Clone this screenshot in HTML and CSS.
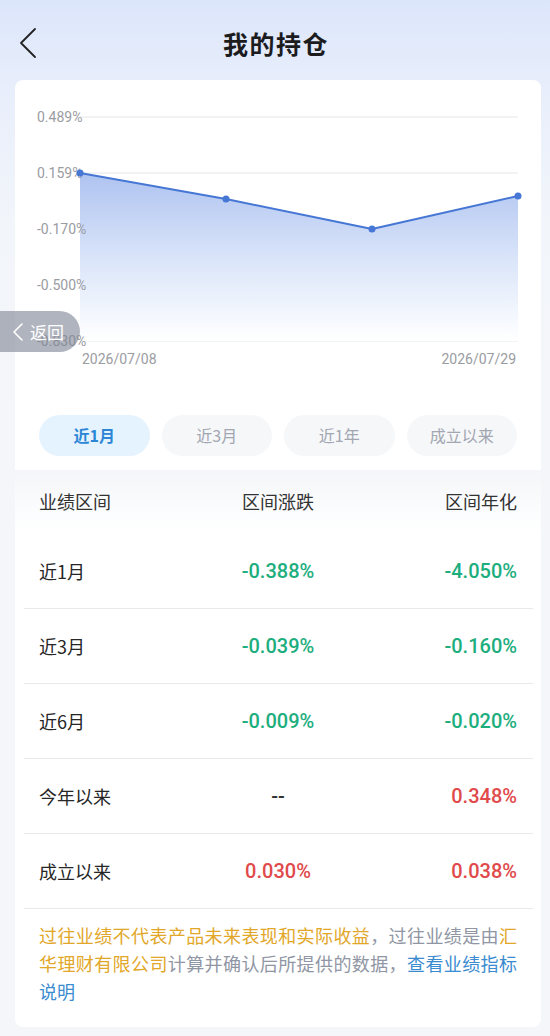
FILE: index.html
```html
<!DOCTYPE html>
<html lang="zh-CN">

<head>
  <meta charset="utf-8">
  <link rel="stylesheet" href="styles.css">
</head>

<body>
  <div class="nav">
    <svg class="nav-back" width="24" height="32" viewBox="0 0 24 32">
      <path d="M17 2 L3 16 L17 30" fill="none" stroke="#222" stroke-width="1.8" stroke-linecap="round" stroke-linejoin="round" />
    </svg>
    <h1 class="nav-title">我的持仓</h1>
    <span></span>
  </div>

  <div class="card">
    <svg class="chart" width="526" height="318" viewBox="0 0 526 318">
      <defs>
        <linearGradient id="area" gradientUnits="userSpaceOnUse" x1="0" y1="93" x2="0" y2="261">
          <stop offset="0" stop-color="#aec3f0" />
          <stop offset="0.55" stop-color="#dde7fa" />
          <stop offset="1" stop-color="#ffffff" />
        </linearGradient>
      </defs>
      <g stroke="#e6e7ea" stroke-width="1">
        <line x1="65" y1="37" x2="503" y2="37" />
        <line x1="65" y1="93" x2="503" y2="93" />
        <line x1="65" y1="149" x2="503" y2="149" />
        <line x1="65" y1="205" x2="503" y2="205" />
        <line x1="65" y1="261" x2="503" y2="261" />
      </g>
      <path d="M65 93 L211 119 L357 149 L503 116 L503 261 L65 261 Z" fill="url(#area)" />
      <g class="axis">
        <text x="22" y="37">0.489%</text>
        <text x="22" y="93">0.159%</text>
        <text x="22" y="149">-0.170%</text>
        <text x="22" y="205">-0.500%</text>
        <text x="22" y="261">-0.830%</text>
      </g>
      <path d="M65 93 L211 119 L357 149 L503 116" fill="none" stroke="#4677d4" stroke-width="2" stroke-linejoin="round" />
      <g fill="#4677d4">
        <circle cx="65" cy="93" r="3.5" />
        <circle cx="211" cy="119" r="3.5" />
        <circle cx="357" cy="149" r="3.5" />
        <circle cx="503" cy="116" r="3.5" />
      </g>
      <g class="dates">
        <text x="67" y="279">2026/07/08</text>
        <text x="501" y="279" text-anchor="end">2026/07/29</text>
      </g>
    </svg>

    <div class="tabs">
      <div class="tab active">近1月</div>
      <div class="tab">近3月</div>
      <div class="tab">近1年</div>
      <div class="tab">成立以来</div>
    </div>

    <div class="table">
      <div class="table-head">
        <span>业绩区间</span>
        <span>区间涨跌</span>
        <span>区间年化</span>
      </div>
      <div class="row">
        <span class="label">近1月</span>
        <span class="num down">-0.388%</span>
        <span class="num down">-4.050%</span>
      </div>
      <div class="row">
        <span class="label">近3月</span>
        <span class="num down">-0.039%</span>
        <span class="num down">-0.160%</span>
      </div>
      <div class="row">
        <span class="label">近6月</span>
        <span class="num down">-0.009%</span>
        <span class="num down">-0.020%</span>
      </div>
      <div class="row">
        <span class="label">今年以来</span>
        <span class="num">--</span>
        <span class="num up">0.348%</span>
      </div>
      <div class="row">
        <span class="label">成立以来</span>
        <span class="num up">0.030%</span>
        <span class="num up">0.038%</span>
      </div>
    </div>

    <p class="note">
      <span class="warn">过往业绩不代表产品未来表现和实际收益</span>，过往业绩是由<span class="warn">汇</span><span class="warn">华理财有限公司</span>计算并确认后所提供的数据，<span class="link">查看业绩指标</span><span class="link keep">说明</span>
    </p>
  </div>

  <div class="back-float">
    <svg width="12" height="20" viewBox="0 0 12 20">
      <path d="M10 2 L2 10 L10 18" fill="none" stroke="#fff" stroke-width="1.6" stroke-linecap="round" stroke-linejoin="round" />
    </svg>
    <span>返回</span>
  </div>
</body>

</html>
```

FILE: styles.css
```css
body {
  margin: 0;
  min-height: 1036px;
  font-family: "Noto Sans CJK SC", "Noto Sans", sans-serif;
  color: #222;
  background: linear-gradient(180deg, #dce6fb 0, #e8eefb 90px, #f2f5fa 220px, #f4f6f9 400px);
}

.nav {
  height: 80px;
  display: grid;
  grid-template-columns: 1fr auto 1fr;
  align-items: center;
  padding: 6px 0 0 18px;
  box-sizing: border-box;
}

.nav-back {
  display: block;
}

.nav-title {
  margin: 0 0 0 -16px;
  font-size: 25px;
  font-weight: bold;
  letter-spacing: 1.5px;
  color: #1c1c1e;
}

.card {
  margin: 0 9px 10px 15px;
  background-color: #fff;
  border-radius: 8px;
  overflow: hidden;
}

.chart {
  display: block;
}

.axis text {
  font-family: Roboto, "Noto Sans", sans-serif;
  font-size: 14px;
  fill: #9a9ca2;
  dominant-baseline: central;
}

.dates text {
  font-family: Roboto, "Noto Sans", sans-serif;
  font-size: 14px;
  fill: #9a9ca2;
  dominant-baseline: central;
}

.tabs {
  display: flex;
  gap: 12px;
  padding: 0 24px;
  margin-top: 17px;
}

.tab {
  flex: 1;
  height: 41px;
  line-height: 41px;
  border-radius: 21px;
  text-align: center;
  font-size: 16px;
  color: #a1a6b1;
  background-color: #f6f7f9;
}

.tab.active {
  background-color: #e5f3fe;
  color: #2c86d6;
  font-weight: bold;
}

.table {
  margin-top: 14px;
}

.table-head {
  display: grid;
  grid-template-columns: 1fr 1fr 1fr;
  align-items: center;
  height: 62px;
  padding: 0 24px 2px;
  font-size: 18px;
  color: #333;
  background: linear-gradient(180deg, #f5f6f9 0, #fbfcfd 60%, #fff 100%);
}

.table-head span:nth-child(2),
.row span:nth-child(2) {
  text-align: center;
}

.table-head span:nth-child(3),
.row span:nth-child(3) {
  text-align: right;
}

.row {
  display: grid;
  grid-template-columns: 1fr 1fr 1fr;
  align-items: center;
  height: 75px;
  box-sizing: border-box;
  margin: 0 8px 0 9px;
  padding: 0 16px 0 15px;
  border-bottom: 1px solid #e8e9ec;
}

.label {
  font-size: 18px;
  color: #262626;
}

.num {
  font-family: Roboto, "Noto Sans", sans-serif;
  font-size: 20px;
  font-weight: 500;
  color: #333;
}

.num.down {
  color: #1dae7e;
}

.num.up {
  color: #e04a4b;
}

.note {
  margin: 0;
  padding: 12px 24px 22px;
  font-size: 18px;
  line-height: 28px;
  text-align: justify;
  color: #9096a4;
}

.warn {
  color: #e2a729;
}

.link {
  color: #3a8bcf;
}

.keep {
  white-space: nowrap;
}

.back-float {
  position: absolute;
  left: 0;
  top: 311px;
  width: 80px;
  height: 41px;
  display: flex;
  align-items: center;
  gap: 6px;
  padding-left: 12px;
  box-sizing: border-box;
  border-radius: 0 21px 21px 0;
  background-color: rgba(128, 134, 150, 0.62);
  color: #fff;
  font-size: 17px;
}
```
